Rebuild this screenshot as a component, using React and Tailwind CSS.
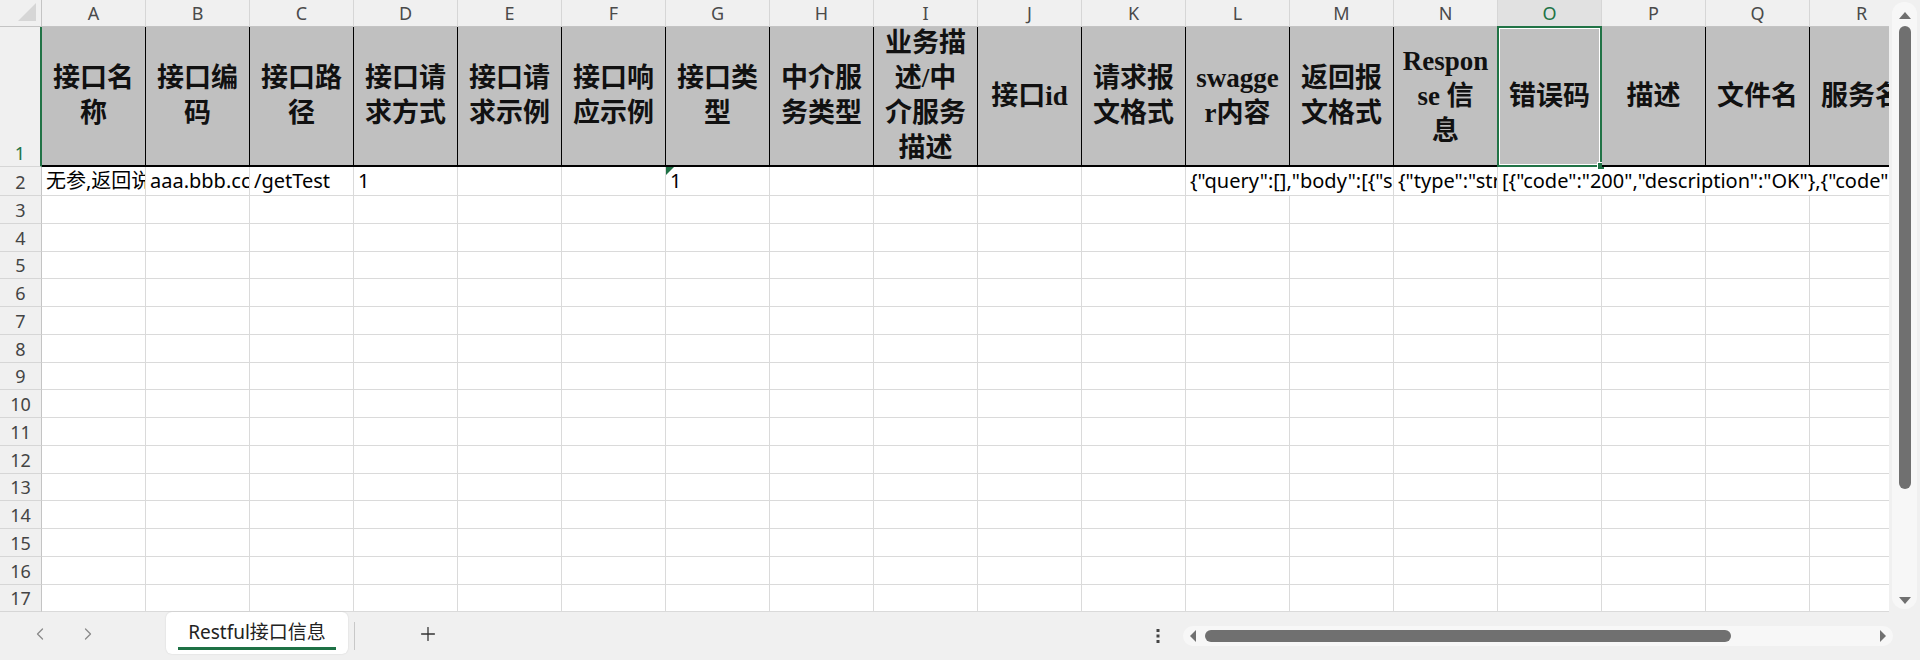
import React from 'react'
import { ChevronLeft, ChevronRight, Plus } from 'lucide-react'

const LETTERS = ['A', 'B', 'C', 'D', 'E', 'F', 'G', 'H', 'I', 'J', 'K', 'L', 'M', 'N', 'O', 'P', 'Q', 'R']

const HEADERS = [
  ['接口名', '称'],
  ['接口编', '码'],
  ['接口路', '径'],
  ['接口请', '求方式'],
  ['接口请', '求示例'],
  ['接口响', '应示例'],
  ['接口类', '型'],
  ['中介服', '务类型'],
  ['业务描', '述/中', '介服务', '描述'],
  ['接口id'],
  ['请求报', '文格式'],
  ['swagge', 'r内容'],
  ['返回报', '文格式'],
  ['Respon', 'se 信', '息'],
  ['错误码'],
  ['描述'],
  ['文件名'],
  ['服务名'],
]

// row 2: text spills over empty neighbours, so those cells are merged visually
const ROW2 = [
  { span: 1, text: '无参,返回说明' },
  { span: 1, text: 'aaa.bbb.cc' },
  { span: 1, text: '/getTest' },
  { span: 1, text: '1' },
  { span: 1 },
  { span: 1 },
  { span: 1, text: '1', flag: true },
  { span: 1 },
  { span: 1 },
  { span: 1 },
  { span: 1 },
  { span: 2, text: '{"query":[],"body":[{"schema":{"type":"object"}}]}' },
  { span: 1, text: '{"type":"string","description":""}' },
  { span: 4, text: '[{"code":"200","description":"OK"},{"code":"401","description":"Unauthorized"}]' },
]

const SPAN_W = { 1: 'w-[104px]', 2: 'w-[208px]', 4: 'w-[416px]' }

const SANS = "font-['Noto_Sans','Noto_Sans_CJK_SC',sans-serif]"
const HEAD = "font-['Liberation_Serif','Noto_Sans_CJK_SC',serif]"

const EMPTY_ROWS = [3, 4, 5, 6, 7, 8, 9, 10, 11, 12, 13, 14, 15, 16, 17]

function RowNum({ n, h, green }) {
  return (
    <div className={`w-[42px] shrink-0 ${h} flex items-end justify-center pb-[1px] bg-[#f0f0f0] border-b border-[#d6d6d6] ${green ? 'border-r-2 border-r-[#217346] text-[#217346]' : 'border-r border-r-[#c4c4c4] text-[#444]'} text-[18px] leading-[24px] ${SANS}`}>
      {n}
    </div>
  )
}

export default function App() {
  return (
    <div className="w-[1920px] h-[660px] bg-[#f0f0f0] flex flex-col overflow-hidden">
      <div className="flex h-[612px]">
        {/* sheet grid */}
        <div className="w-[1889px] h-[612px] overflow-hidden bg-white">
          {/* column letters */}
          <div className="flex h-[27px]">
            <div className="w-[42px] shrink-0 h-[27px] bg-[#f0f0f0] border-r border-b border-[#c4c4c4] flex items-end justify-end">
              <svg width="22" height="22" viewBox="0 0 22 22" className="mb-[3px] mr-[3px]">
                <polygon points="20,2 20,20 2,20" fill="#d6d6d6" />
              </svg>
            </div>
            {LETTERS.map(l => (
              <div key={l} className={`w-[104px] shrink-0 h-[27px] flex items-center justify-center border-r border-b ${l === 'O' ? 'bg-[#e1e1e1] text-[#217346] border-b-[#c4c4c4] border-r-[#d6d6d6]' : 'bg-[#f0f0f0] text-[#4a4a4a] border-[#d6d6d6] border-b-[#c4c4c4]'} text-[18px] ${SANS}`}>
                {l}
              </div>
            ))}
          </div>

          {/* row 1: header cells */}
          <div className="flex h-[140px]">
            <RowNum n={1} h="h-[140px]" green />
            {HEADERS.map((lines, i) => (
              <div key={i} className={`relative w-[104px] shrink-0 h-[140px] bg-[#c0c0c0] border-r border-black border-b-2 border-b-black flex flex-col items-center justify-center text-[27px] leading-[35px] font-semibold text-[#111] ${HEAD}`}>
                {lines.map((t, j) => (
                  <span key={j} className="whitespace-nowrap">{t}</span>
                ))}
                {LETTERS[i] === 'O' && (
                  <div className="absolute -top-[1px] -left-[1px] -right-[1px] -bottom-[2px] border-2 border-[#217346]">
                    <div className="absolute inset-0 border border-white" />
                    <div className="absolute -right-[5px] -bottom-[5px] w-[8px] h-[8px] bg-[#217346] border border-white" />
                  </div>
                )}
              </div>
            ))}
          </div>

          {/* row 2: data */}
          <div className="flex h-[29px]">
            <RowNum n={2} h="h-[29px]" />
            {ROW2.map((c, i) => (
              <div key={i} className={`relative ${SPAN_W[c.span]} shrink-0 h-[29px] border-r border-b border-[#dadada] overflow-hidden whitespace-nowrap px-[4px] flex items-center text-[20px] text-black ${SANS}`}>
                {c.flag && (
                  <svg width="8" height="8" viewBox="0 0 8 8" className="absolute top-0 left-0">
                    <polygon points="0,0 8,0 0,8" fill="#1e7145" />
                  </svg>
                )}
                {c.text}
              </div>
            ))}
          </div>

          {/* empty rows */}
          {EMPTY_ROWS.map(n => (
            <div key={n} className="flex h-[27.75px]">
              <RowNum n={n} h="h-[27.75px]" />
              {LETTERS.map(l => (
                <div key={l} className="w-[104px] shrink-0 h-[27.75px] border-r border-b border-[#dadada]" />
              ))}
            </div>
          ))}
        </div>

        {/* vertical scrollbar */}
        <div className="w-[31px] h-[612px] flex justify-center pt-[2px]">
          <div className="w-[25px] h-[607px] rounded-[12px] bg-[#f7f7f7] flex flex-col items-center">
            <svg width="14" height="9" viewBox="0 0 14 9" className="mt-[9px]">
              <polygon points="7,1 13,8 1,8" fill="#707070" />
            </svg>
            <div className="mt-[6px] w-[12px] h-[463px] rounded-full bg-[#707070]" />
            <div className="flex-1" />
            <svg width="14" height="9" viewBox="0 0 14 9" className="mb-[4px]">
              <polygon points="1,1 13,1 7,8" fill="#707070" />
            </svg>
          </div>
        </div>
      </div>

      {/* sheet tabs bar */}
      <div className="flex h-[48px] items-start">
        <div className="w-[166px] h-[44px] flex items-center pl-[30px] gap-[28px] text-[#8a8a8a]">
          <ChevronLeft size={20} strokeWidth={1.5} />
          <ChevronRight size={20} strokeWidth={1.5} />
        </div>
        <div className="w-[182px] h-[42px] bg-white rounded-[6px] shadow-[0_0_2px_rgba(0,0,0,0.12)] flex flex-col items-center">
          <span className={`mt-[6px] text-[19px] leading-[28px] text-[#222] ${SANS}`}>Restful接口信息</span>
          <div className="mt-[1px] w-[158px] h-[3px] bg-[#1e7145]" />
        </div>
        <div className="ml-[6px] mt-[10px] w-px h-[28px] bg-[#c8c8c8]" />
        <div className="ml-[62px] h-[44px] flex items-center text-[#333]">
          <Plus size={22} strokeWidth={1.4} />
        </div>
        <div className="ml-[717px] h-[48px] flex items-center">
          <svg width="4" height="16" viewBox="0 0 4 16">
            <rect x="0.5" y="1" width="3" height="3" fill="#444" />
            <rect x="0.5" y="6.5" width="3" height="3" fill="#444" />
            <rect x="0.5" y="12" width="3" height="3" fill="#444" />
          </svg>
        </div>
        <div className="ml-[23px] mt-[14px] w-[710px] h-[20px] rounded-[10px] bg-[#f7f7f7] flex items-center px-[6px]">
          <svg width="8" height="12" viewBox="0 0 8 12">
            <polygon points="7,0 7,12 1,6" fill="#707070" />
          </svg>
          <div className="ml-[8px] w-[526px] h-[12px] rounded-full bg-[#707070]" />
          <div className="flex-1" />
          <svg width="8" height="12" viewBox="0 0 8 12">
            <polygon points="1,0 7,6 1,12" fill="#707070" />
          </svg>
        </div>
      </div>
    </div>
  )
}
